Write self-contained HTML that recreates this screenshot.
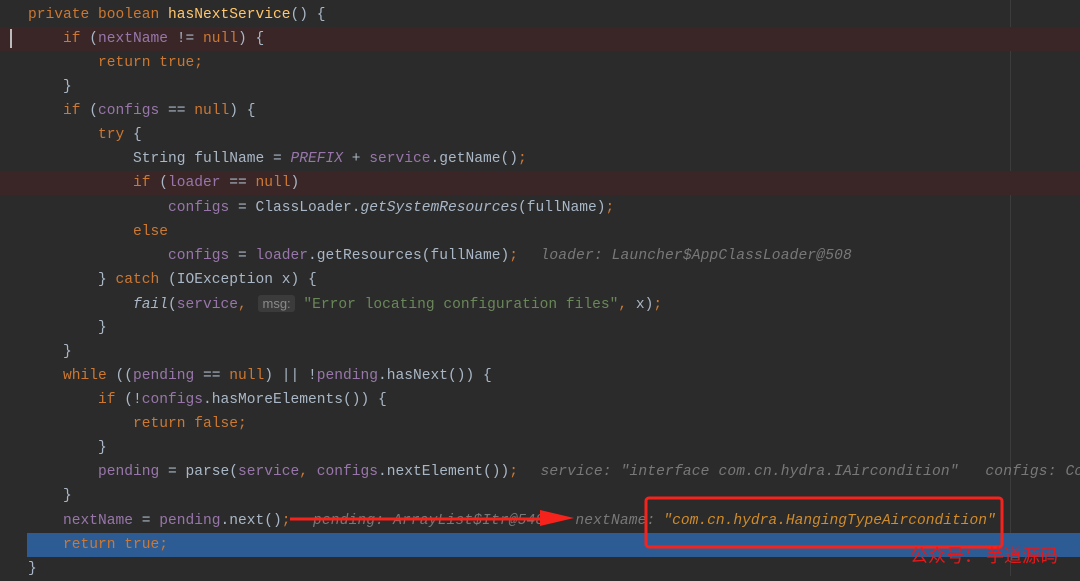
<!DOCTYPE html>
<html><head><meta charset="utf-8"><style>
body{margin:0;width:1080px;height:576px;background:#2b2b2b;overflow:hidden;position:relative;font-family:"Liberation Mono",monospace;font-size:14.58px;color:#a9b7c6}
.l{position:absolute;left:0;width:1080px;height:24px;line-height:24px;white-space:pre}
.t{position:absolute;left:28px;top:0}
.k{color:#cc7832}.f{color:#9876aa}.m{color:#ffc66d}.s{color:#6a8759}.i{font-style:italic}
.h{color:#787878;font-style:italic;margin-left:5px;letter-spacing:0.15px}
.red{background:#3a2626}
.sel{background:#2d5c94;left:27px}
.g{position:absolute;width:1px;background:#373737}
.hint{background:#3b3b3b;color:#8a8a8a;font-family:"Liberation Sans",sans-serif;font-size:13px;border-radius:3px;padding:1px 4px;margin-left:3px}
</style></head><body>
<div class="g" style="left:1010px;top:0;height:576px;background:#3c3c3c"></div>
<div class="l" style="top:3px"><span class="t"><span class="k">private boolean </span><span class="m">hasNextService</span>() {</span></div>
<div class="l red" style="top:27px"><span class="t">    <span class="k">if </span>(<span class="f">nextName</span> != <span class="k">null</span>) {</span></div>
<div style="position:absolute;left:10px;top:29px;width:2px;height:19px;background:#bbb"></div>
<div class="l" style="top:51px"><span class="t">        <span class="k">return true;</span></span></div>
<div class="l" style="top:75px"><span class="t">    }</span></div>
<div class="l" style="top:99px"><span class="t">    <span class="k">if </span>(<span class="f">configs</span> == <span class="k">null</span>) {</span></div>
<div class="l" style="top:123px"><span class="t">        <span class="k">try </span>{</span></div>
<div class="l" style="top:147px"><span class="t">            String fullName = <span class="f i">PREFIX</span> + <span class="f">service</span>.getName()<span class="k">;</span></span></div>
<div class="l red" style="top:171px"><span class="t">            <span class="k">if </span>(<span class="f">loader</span> == <span class="k">null</span>)</span></div>
<div class="l" style="top:196px"><span class="t">                <span class="f">configs</span> = ClassLoader.<span class="i">getSystemResources</span>(fullName)<span class="k">;</span></span></div>
<div class="l" style="top:220px"><span class="t">            <span class="k">else</span></span></div>
<div class="l" style="top:244px"><span class="t">                <span class="f">configs</span> = <span class="f">loader</span>.getResources(fullName)<span class="k">;</span>  <span class="h">loader: Launcher$AppClassLoader@508</span></span></div>
<div class="l" style="top:268px"><span class="t">        } <span class="k">catch </span>(IOException x) {</span></div>
<div class="l" style="top:292px"><span class="t">            <span class="i">fail</span>(<span class="f">service</span><span class="k">,</span> <span class="hint">msg:</span> <span class="s">"Error locating configuration files"</span><span class="k">,</span> x)<span class="k">;</span></span></div>
<div class="l" style="top:316px"><span class="t">        }</span></div>
<div class="l" style="top:340px"><span class="t">    }</span></div>
<div class="l" style="top:364px"><span class="t">    <span class="k">while </span>((<span class="f">pending</span> == <span class="k">null</span>) || !<span class="f">pending</span>.hasNext()) {</span></div>
<div class="l" style="top:388px"><span class="t">        <span class="k">if </span>(!<span class="f">configs</span>.hasMoreElements()) {</span></div>
<div class="l" style="top:412px"><span class="t">            <span class="k">return false;</span></span></div>
<div class="l" style="top:436px"><span class="t">        }</span></div>
<div class="l" style="top:460px"><span class="t">        <span class="f">pending</span> = parse(<span class="f">service</span><span class="k">,</span> <span class="f">configs</span>.nextElement())<span class="k">;</span>  <span class="h">service: "interface com.cn.hydra.IAircondition"   configs: Co</span></span></div>
<div class="l" style="top:484px"><span class="t">    }</span></div>
<div class="l" style="top:509px"><span class="t">    <span class="f">nextName</span> = <span class="f">pending</span>.next()<span class="k">;</span>  <span class="h">pending: ArrayList$Itr@548</span><span class="h" style="margin-left:31px">nextName: </span><span class="i" style="color:#d08b2a;margin-left:-1px">"com.cn.hydra.HangingTypeAircondition"</span></span></div>
<div class="l sel" style="top:533px;width:1053px"><span class="t" style="left:1px">    <span class="k">return true;</span></span></div>
<div class="l" style="top:557px"><span class="t">}</span></div>
<svg style="position:absolute;left:0;top:0" width="1080" height="576">
<line x1="290" y1="519" x2="555" y2="519" stroke="#f5231c" stroke-width="3"/>
<polygon points="540,510 574,518 540,526" fill="#f5231c"/>
<rect x="646" y="498" width="356" height="49" rx="3" fill="none" stroke="#f5231c" stroke-width="3"/>
</svg>
<div style="position:absolute;left:910px;top:543px;color:#e8181a;font-family:'Noto Sans CJK SC',sans-serif;font-size:18px;line-height:24px">公众号：  芋道源码</div>
</body></html>
